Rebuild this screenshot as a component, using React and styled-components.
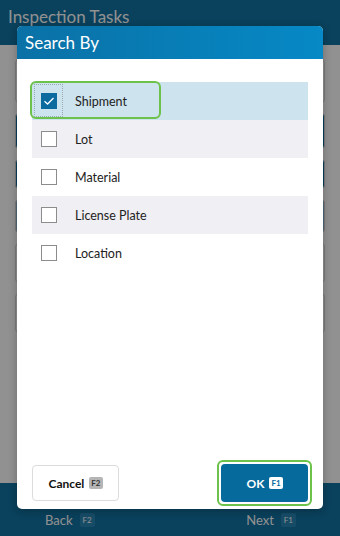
import React from "react";
import styled, { createGlobalStyle } from "styled-components";

const Global = createGlobalStyle`
  html, body { margin: 0; padding: 0; }
  body { font-family: "Lato", "Noto Sans", sans-serif; background: #ffffff; }
  * { box-sizing: border-box; }
`;

const Page = styled.div`
  position: relative;
  width: 340px;
  height: 536px;
  display: flex;
  flex-direction: column;
  overflow: hidden;
  background: #ffffff;
`;

const AppHeader = styled.header`
  height: 45px;
  background: #1272a3;
  color: #ffffff;
  font-size: 17px;
  padding: 6px 8px;
  display: flex;
  align-items: flex-start;
`;

const Content = styled.main`
  flex: 1;
  padding: 14px 15px;
  display: flex;
  flex-direction: column;
  gap: 10px;
`;

const Field = styled.div`
  height: ${(p) => p.h || 34}px;
  border: 1px solid #d6d6d6;
  border-radius: 4px;
  background: ${(p) => p.bg || "#ffffff"};
`;

const AppFooter = styled.footer`
  height: 53px;
  background: #1272a3;
  display: flex;
  align-items: flex-end;
  justify-content: space-between;
  padding: 0 44px 8px 45px;
`;

const FooterBtn = styled.span`
  color: #ffffff;
  font-size: 13px;
  display: flex;
  align-items: center;
  gap: 7px;
`;

const FooterKey = styled.span`
  font-size: 8px;
  background: #2a86b6;
  padding: 2px 3px;
  border-radius: 2px;
`;

const Overlay = styled.div`
  position: absolute;
  inset: 0;
  background: rgba(0, 0, 0, 0.43);
  display: flex;
  justify-content: center;
  padding-top: 26px;
`;

const Dialog = styled.div`
  width: 306px;
  height: 483px;
  background: #ffffff;
  border-radius: 5px;
  display: flex;
  flex-direction: column;
  overflow: hidden;
  box-shadow: 0 2px 8px rgba(0, 0, 0, 0.25);
`;

const DialogHeader = styled.div`
  height: 33px;
  background: linear-gradient(90deg, #0a71a6 0%, #0689c6 100%);
  color: #ffffff;
  font-size: 17px;
  display: flex;
  align-items: center;
  padding: 0 8px 1px;
`;

const DialogBody = styled.div`
  flex: 1;
  display: flex;
  flex-direction: column;
  padding: 23px 15px 3px 15px;
`;

const List = styled.div`
  display: flex;
  flex-direction: column;
  flex: 1;
`;

const Row = styled.label`
  position: relative;
  height: 38px;
  display: flex;
  align-items: center;
  padding-left: 9px;
  gap: 18px;
  font-size: 12.5px;
  color: #222222;
  background: ${(p) => (p.selected ? "#cde3ee" : p.alt ? "#efeff4" : "#ffffff")};
`;

const FocusRing = styled.div`
  position: absolute;
  left: -2px;
  top: -1px;
  width: 131px;
  height: 38px;
  border: 2px solid #6cc24a;
  border-radius: 6px;
  pointer-events: none;
`;

const DottedFocus = styled.div`
  position: absolute;
  left: 2px;
  top: 2px;
  width: 29px;
  height: 33px;
  border: 1px dotted #9aaab4;
  pointer-events: none;
`;

const Box = styled.span`
  width: 16px;
  height: 16px;
  border: 1.5px solid ${(p) => (p.checked ? "#0b6a9e" : "#8c8c8c")};
  background: ${(p) => (p.checked ? "#0b6a9e" : "#ffffff")};
  display: flex;
  align-items: center;
  justify-content: center;
  flex: none;
`;

const Buttons = styled.div`
  display: flex;
  justify-content: space-between;
  align-items: center;
`;

const CancelButton = styled.button`
  width: 87px;
  height: 36px;
  border: 1px solid #dcdcdc;
  border-radius: 4px;
  background: #ffffff;
  font-family: inherit;
  font-weight: 700;
  font-size: 12px;
  color: #111111;
  display: flex;
  align-items: center;
  justify-content: center;
  gap: 5px;
`;

const OkFocus = styled.div`
  padding: 2px;
  border: 2px solid #6cc24a;
  border-radius: 6px;
  margin-right: -4px;
`;

const OkButton = styled.button`
  width: 87px;
  height: 38px;
  border: none;
  border-radius: 4px;
  background: #066a9c;
  font-family: inherit;
  font-weight: 700;
  font-size: 12px;
  color: #ffffff;
  display: flex;
  align-items: center;
  justify-content: center;
  gap: 5px;
`;

const Key = styled.span`
  font-size: 8px;
  font-weight: 700;
  padding: 2px 2px;
  border-radius: 2px;
  line-height: 1;
  background: ${(p) => (p.light ? "#ffffff" : "#b5b5b5")};
  color: ${(p) => (p.light ? "#066a9c" : "#333333")};
`;

const Check = () => (
  <svg width="12" height="10" viewBox="0 0 12 10">
    <path d="M1.5 5.2 L4.6 8 L10.5 2" fill="none" stroke="#ffffff" strokeWidth="1.3" />
  </svg>
);

const items = ["Shipment", "Lot", "Material", "License Plate", "Location"];

export default function App() {
  return (
    <>
      <Global />
      <Page>
        <AppHeader>Inspection Tasks</AppHeader>
        <Content>
          <Field h={44} />
          <Field h={36} bg="#0f6fa0" />
          <Field h={30} bg="#0f6fa0" />
          <Field h={34} bg="#8fb8d0" />
          <Field h={40} />
          <Field h={40} />
        </Content>
        <AppFooter>
          <FooterBtn>
            Back <FooterKey>F2</FooterKey>
          </FooterBtn>
          <FooterBtn>
            Next <FooterKey>F1</FooterKey>
          </FooterBtn>
        </AppFooter>
        <Overlay>
          <Dialog>
            <DialogHeader>Search By</DialogHeader>
            <DialogBody>
              <List>
                {items.map((label, i) => (
                  <Row key={label} selected={i === 0} alt={i % 2 === 1}>
                    {i === 0 && <DottedFocus />}
                    {i === 0 && <FocusRing />}
                    <Box checked={i === 0}>{i === 0 && <Check />}</Box>
                    {label}
                  </Row>
                ))}
              </List>
              <Buttons>
                <CancelButton>
                  Cancel <Key>F2</Key>
                </CancelButton>
                <OkFocus>
                  <OkButton>
                    OK <Key light>F1</Key>
                  </OkButton>
                </OkFocus>
              </Buttons>
            </DialogBody>
          </Dialog>
        </Overlay>
      </Page>
    </>
  );
}
